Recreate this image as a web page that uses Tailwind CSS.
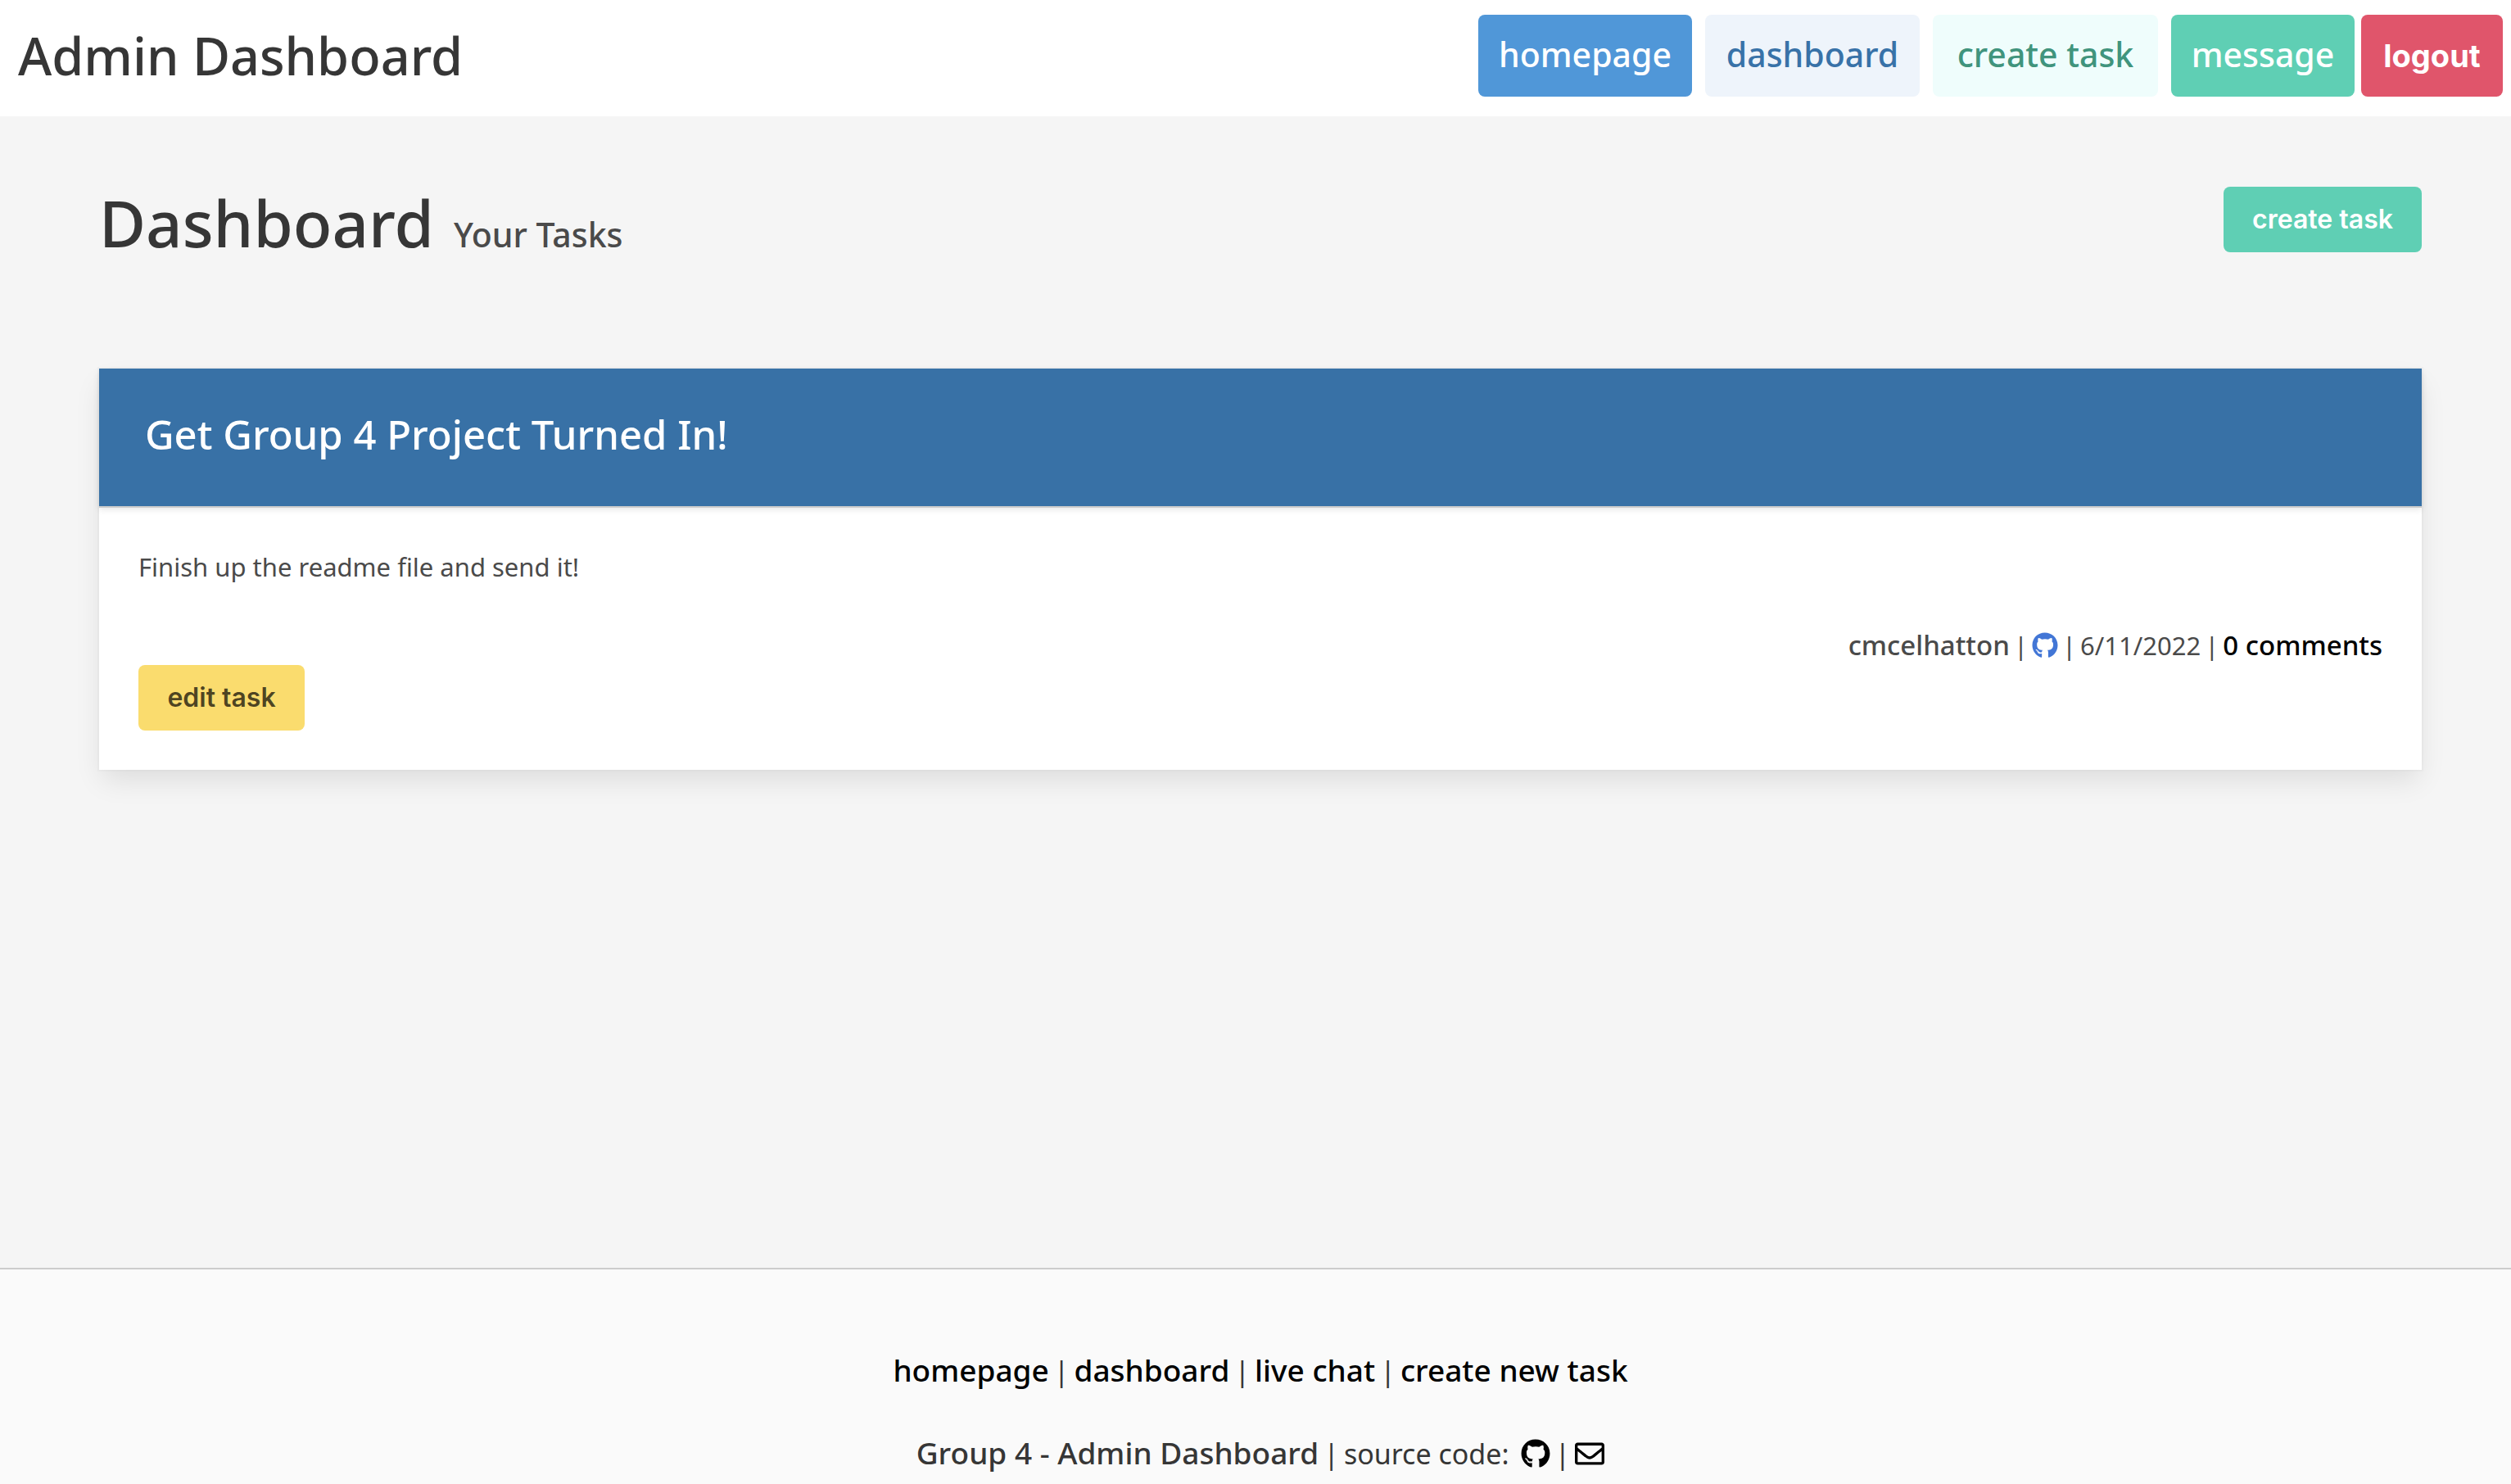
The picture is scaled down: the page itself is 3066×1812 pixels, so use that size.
<!DOCTYPE html>
<html lang="en">
<head>
<meta charset="utf-8">
<meta name="viewport" content="width=device-width, initial-scale=1">
<title>Admin Dashboard</title>
<script src="https://cdn.jsdelivr.net/npm/@tailwindcss/browser@4"></script>
</head>
<body class="flex min-h-screen flex-col bg-[#f5f5f5] font-['Noto_Sans',sans-serif] text-[#4a4a4a]">

<svg class="hidden" aria-hidden="true">
  <symbol id="github" viewBox="0 0 496 512"><path d="M165.9 397.4c0 2-2.3 3.6-5.2 3.6-3.3.3-5.6-1.3-5.6-3.6 0-2 2.3-3.6 5.2-3.6 3-.3 5.6 1.3 5.6 3.6zm-31.1-4.5c-.7 2 1.3 4.3 4.3 4.9 2.6 1 5.6 0 6.2-2s-1.3-4.3-4.3-5.2c-2.6-.7-5.5.3-6.2 2.3zm44.2-1.7c-2.9.7-4.9 2.6-4.6 4.9.3 2 2.9 3.3 5.9 2.6 2.9-.7 4.9-2.6 4.6-4.6-.3-1.9-3-3.2-5.9-2.9zM244.8 8C106.1 8 0 113.3 0 252c0 110.9 69.8 205.8 169.5 239.2 12.8 2.3 17.3-5.6 17.3-12.1 0-6.2-.3-40.4-.3-61.4 0 0-70 15-84.7-29.8 0 0-11.4-29.1-27.8-36.6 0 0-22.9-15.7 1.6-15.4 0 0 24.9 2 38.6 25.8 21.9 38.6 58.6 27.5 72.9 20.9 2.3-16 8.8-27.1 16-33.7-55.9-6.2-112.3-14.3-112.3-110.5 0-27.5 7.6-41.3 23.6-58.9-2.6-6.5-11.1-33.3 2.6-67.9 20.9-6.5 69 27 69 27 20-5.6 41.5-8.5 62.8-8.5s42.8 2.9 62.8 8.5c0 0 48.1-33.6 69-27 13.7 34.7 5.2 61.4 2.6 67.9 16 17.7 25.8 31.5 25.8 58.9 0 96.5-58.9 104.2-114.8 110.5 9.2 7.9 17 22.9 17 46.4 0 33.7-.3 75.4-.3 83.6 0 6.5 4.6 14.4 17.3 12.1C428.2 457.8 496 362.9 496 252 496 113.3 383.5 8 244.8 8zM97.2 352.9c-1.3 1-1 3.3.7 5.2 1.6 1.6 3.9 2.3 5.2 1 1.3-1 1-3.3-.7-5.2-1.6-1.6-3.9-2.3-5.2-1zm-10.8-8.1c-.7 1.3.3 2.9 2.3 3.9 1.6 1 3.6.7 4.3-.7.7-1.3-.3-2.9-2.3-3.9-2-.6-3.6-.3-4.3.7zm32.4 35.6c-1.6 1.3-1 4.3 1.3 6.2 2.3 2.3 5.2 2.6 6.5 1 1.3-1.3.7-4.3-1.3-6.2-2.2-2.3-5.2-2.6-6.5-1zm-11.4-14.7c-1.6 1-1.6 3.6 0 5.9 1.6 2.3 4.3 3.3 5.6 2.3 1.6-1.3 1.6-3.9 0-6.2-1.4-2.3-4-3.3-5.6-2z"/></symbol>
  <symbol id="envelope" viewBox="0 0 512 512"><path d="M464 64H48C21.49 64 0 85.49 0 112v288c0 26.51 21.49 48 48 48h416c26.51 0 48-21.49 48-48V112c0-26.51-21.49-48-48-48zm0 48v40.805c-22.422 18.259-58.168 46.651-134.587 106.49-16.841 13.247-50.201 45.072-73.413 44.701-23.208.375-56.579-31.459-73.413-44.701C106.18 199.465 70.425 171.067 48 152.805V112h416zM48 400V214.398c22.914 18.251 55.409 43.862 104.938 82.646 21.857 17.205 60.134 55.186 103.062 54.955 42.717.231 80.509-37.199 103.053-54.947 49.528-38.783 82.032-64.401 104.947-82.653V400H48z"/></symbol>
</svg>

<header class="flex items-center justify-between bg-white pt-[18px] pr-[10px] pb-6 pl-[22px]">
  <h1 class="text-[63px] leading-[80px] font-medium text-[#363636]">Admin Dashboard</h1>
  <nav class="flex text-[41px] leading-[60px] font-medium" aria-label="Main">
    <a href="#" class="mr-4 flex h-[100px] w-[261px] items-center justify-center rounded-lg bg-[#5097d8] pb-1 text-white">homepage</a>
    <a href="#" class="mr-4 flex h-[100px] w-[262px] items-center justify-center rounded-lg bg-[#eef4fb] pb-1 text-[#3872a8]">dashboard</a>
    <a href="#" class="mr-4 flex h-[100px] w-[275px] items-center justify-center rounded-lg bg-[#effdfc] pb-1 text-[#40947d]">create task</a>
    <a href="#" class="mr-2 flex h-[100px] w-[224px] items-center justify-center rounded-lg bg-[#5fcfb4] pb-1 text-white">message</a>
    <button type="button" class="h-[100px] w-[173px] rounded-lg bg-[#e0556b] font-['Inter',sans-serif] text-[38px] font-bold text-white">logout</button>
  </nav>
</header>

<main class="flex-1 pt-[86px] pr-[109px] pb-12 pl-[121px]">
  <div class="flex h-20 items-start justify-between">
    <div class="flex items-baseline gap-6 pt-1">
      <h2 class="text-[78px] leading-[80px] font-medium text-[#363636]">Dashboard</h2>
      <p class="text-[41px] leading-[60px] font-medium">Your Tasks</p>
    </div>
    <button type="button" class="h-20 w-[242px] rounded-lg bg-[#5fcfb4] font-['Inter',sans-serif] text-[32px] font-semibold text-white">create task</button>
  </div>

  <article class="mt-[142px] bg-white shadow-[0_16px_32px_-4px_rgba(10,10,10,0.1),0_0_0_2px_rgba(10,10,10,0.02)]">
    <header class="h-[168px] bg-[#3871a6] px-14 pt-12 shadow-[0_4px_8px_rgba(10,10,10,0.1)]">
      <h3 class="text-[49px] leading-[64px] font-medium text-white">Get Group 4 Project Turned In!</h3>
    </header>
    <div class="border-t-2 border-[#ccc] px-12 pt-12 pb-12 text-[31px] leading-[48px]">
      <p>Finish up the readme file and send it!</p>
      <div class="mt-12 flex items-baseline justify-end gap-[5px]">
        <span class="text-[33px] font-medium">cmcelhatton</span>
        <span>|</span>
        <a href="#" class="self-center text-[#4276d6]" aria-label="GitHub profile"><svg class="size-8 fill-current"><use href="#github"/></svg></a>
        <span>|</span>
        <time datetime="2022-06-11">6/11/2022</time>
        <span>|</span>
        <a href="#" class="text-[33px] font-medium text-black">0 comments</a>
      </div>
      <button type="button" class="h-20 w-[203px] rounded-lg bg-[#fadc6e] font-['Inter',sans-serif] text-[32px] font-semibold text-black/70">edit task</button>
    </div>
  </article>
</main>

<footer class="flex flex-col items-center gap-[46px] border-t-2 border-[#ccc] bg-[#fafafa] pt-24 pb-[10px] pl-3 text-[34px] leading-[54px] text-[#363636]">
  <nav class="flex items-baseline gap-[6px]" aria-label="Footer">
    <a href="#" class="text-[37px] font-medium text-black">homepage</a>
    <span>|</span>
    <a href="#" class="text-[37px] font-medium text-black">dashboard</a>
    <span>|</span>
    <a href="#" class="text-[37px] font-medium text-black">live chat</a>
    <span>|</span>
    <a href="#" class="text-[37px] font-medium text-black">create new task</a>
  </nav>
  <p class="flex items-baseline gap-[6px]">
    <span class="text-[37px] font-medium">Group 4 - Admin Dashboard</span>
    <span>|</span>
    <span>source code:</span>
    <a href="#" class="self-center pl-2 text-black" aria-label="Source on GitHub"><svg class="size-9 fill-current"><use href="#github"/></svg></a>
    <span>|</span>
    <a href="#" class="self-center text-black" aria-label="Email"><svg class="size-9 fill-current"><use href="#envelope"/></svg></a>
  </p>
</footer>
</body>
</html>
